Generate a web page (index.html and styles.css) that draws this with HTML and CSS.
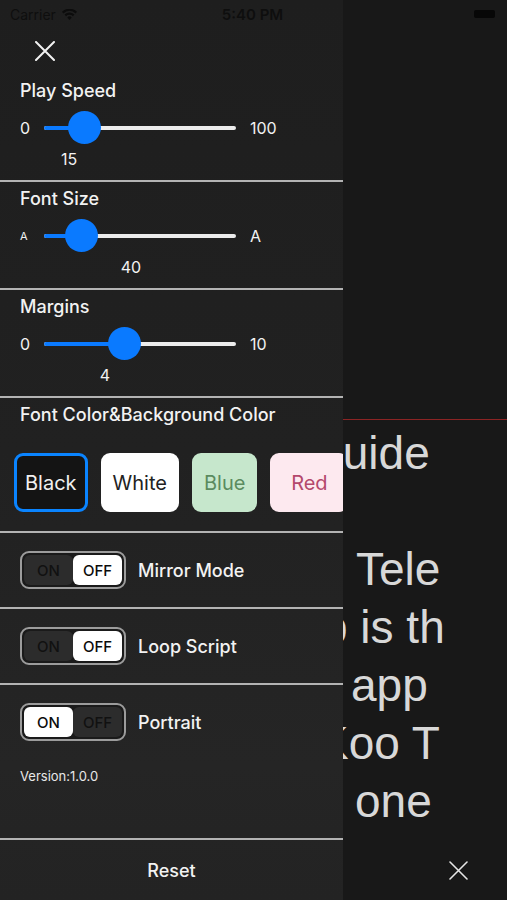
FILE: index.html
```html
<!DOCTYPE html>
<html lang="en">

<head>
    <meta charset="UTF-8">
    <meta name="viewport" content="width=device-width, initial-scale=1.0">
    <title>Settings</title>
    <link rel="stylesheet" href="styles.css">
</head>

<body>
    <div class="statusbar">
        <span class="carrier">Carrier
            <svg class="wifi" width="15" height="11" viewBox="0 0 15 11">
                <path d="M7.5 11 L5.3 8.4 A3.2 3.2 0 0 1 9.7 8.4 Z" fill="#0c0c0c"/>
                <path d="M2.6 5.6 A7 7 0 0 1 12.4 5.6 L11 7.2 A4.9 4.9 0 0 0 4 7.2 Z" fill="#0c0c0c"/>
                <path d="M0 2.8 A10.6 10.6 0 0 1 15 2.8 L13.6 4.4 A8.5 8.5 0 0 0 1.4 4.4 Z" fill="#0c0c0c"/>
            </svg>
        </span>
        <span class="clock">5:40 PM</span>
        <span class="battery"></span>
    </div>

    <div class="app">
        <div class="panel">
            <div class="close-row">
                <svg width="20" height="20" viewBox="0 0 20 20">
                    <path d="M1 1 L19 19 M19 1 L1 19" stroke="#f2f2f2" stroke-width="2" stroke-linecap="round"/>
                </svg>
            </div>

            <div class="section">
                <div class="title">Play Speed</div>
                <div class="slider-row">
                    <span class="min">0</span>
                    <div class="track" style="--p: 0.15">
                        <span class="fill"></span>
                        <span class="thumb"></span>
                    </div>
                    <span class="max">100</span>
                </div>
                <div class="value"><span style="--x: 25px">15</span></div>
            </div>

            <div class="section">
                <div class="title">Font Size</div>
                <div class="slider-row">
                    <span class="min small-a">A</span>
                    <div class="track" style="--p: 0.135">
                        <span class="fill"></span>
                        <span class="thumb"></span>
                    </div>
                    <span class="max">A</span>
                </div>
                <div class="value"><span style="--x: 87px">40</span></div>
            </div>

            <div class="section">
                <div class="title">Margins</div>
                <div class="slider-row">
                    <span class="min">0</span>
                    <div class="track" style="--p: 0.4">
                        <span class="fill"></span>
                        <span class="thumb"></span>
                    </div>
                    <span class="max">10</span>
                </div>
                <div class="value"><span style="--x: 61px">4</span></div>
            </div>

            <div class="section colors">
                <div class="title">Font Color&amp;Background Color</div>
                <div class="swatches">
                    <button class="swatch black selected">Black</button>
                    <button class="swatch white">White</button>
                    <button class="swatch blue">Blue</button>
                    <button class="swatch red">Red</button>
                </div>
            </div>

            <div class="toggle-row">
                <div class="seg">
                    <span class="seg-opt">ON</span>
                    <span class="seg-opt active">OFF</span>
                </div>
                <span class="toggle-label">Mirror Mode</span>
            </div>

            <div class="toggle-row">
                <div class="seg">
                    <span class="seg-opt">ON</span>
                    <span class="seg-opt active">OFF</span>
                </div>
                <span class="toggle-label">Loop Script</span>
            </div>

            <div class="toggle-row last">
                <div class="seg">
                    <span class="seg-opt active">ON</span>
                    <span class="seg-opt">OFF</span>
                </div>
                <span class="toggle-label">Portrait</span>
                <div class="version">Version:1.0.0</div>
            </div>

            <div class="reset">Reset</div>
        </div>

        <div class="stage">
            <div class="marker"></div>
            <div class="script">
                <p class="ln ln-1">Guide</p>
                <p class="ln">&nbsp;</p>
                <p class="ln ln-3">Tele</p>
                <p class="ln ln-4">p is th</p>
                <p class="ln ln-5">app</p>
                <p class="ln ln-6">Koo T</p>
                <p class="ln ln-7">one</p>
            </div>
            <div class="stage-bottom">
                <svg width="19" height="19" viewBox="0 0 19 19">
                    <path d="M1 1 L18 18 M18 1 L1 18" stroke="#e6e6e6" stroke-width="1.6" stroke-linecap="round"/>
                </svg>
            </div>
        </div>
    </div>
</body>

</html>
```

FILE: styles.css
```css
body {
    margin: 0;
    width: 507px;
    height: 900px;
    overflow: hidden;
    background-color: #181818;
    font-family: 'Inter', 'Liberation Sans', sans-serif;
    color: #f2f2f2;
    position: relative;
}

.statusbar {
    position: absolute;
    top: 0;
    left: 0;
    right: 0;
    height: 28px;
    display: flex;
    align-items: center;
    justify-content: space-between;
    padding: 0 12px 0 10px;
    color: #0e0e0e;
    z-index: 2;
}

.carrier {
    display: flex;
    align-items: center;
    gap: 6px;
    font-size: 14px;
    width: 110px;
}

.clock {
    font-size: 15px;
    font-weight: 600;
}

.battery {
    width: 110px;
    display: flex;
    justify-content: flex-end;
}

.battery::after {
    content: "";
    width: 21px;
    height: 8px;
    border-radius: 2px;
    background-color: #070707;
}

.app {
    display: grid;
    grid-template-columns: 343px 1fr;
    height: 900px;
}

.panel {
    display: flex;
    flex-direction: column;
    padding-top: 28px;
    background: linear-gradient(180deg, #1e1e1e 0%, #212121 50%, #252525 85%, #232323 100%);
}

.close-row {
    height: 46px;
    display: flex;
    align-items: center;
    padding-left: 35px;
}

.section {
    padding: 6px 20px 12px;
    border-bottom: 2px solid #b3b3b3;
}

.title {
    font-size: 18px;
    line-height: 22px;
    font-weight: 500;
}

.slider-row {
    display: flex;
    align-items: center;
    height: 34px;
    margin-top: 9px;
    font-size: 16px;
}

.min {
    width: 24px;
}

.small-a {
    font-size: 11px;
}

.max {
    margin-left: 14px;
}

.track {
    position: relative;
    width: 192px;
    height: 4px;
    border-radius: 2px;
    background-color: #ececec;
}

.fill {
    position: absolute;
    left: 0;
    top: 0;
    bottom: 0;
    width: calc(var(--p) * (100% - 33px) + 16px);
    border-radius: 2px;
    background-color: #0a7aff;
}

.thumb {
    position: absolute;
    top: -15px;
    left: calc(var(--p) * (100% - 33px));
    width: 33px;
    height: 33px;
    border-radius: 50%;
    background-color: #0a7aff;
}

.value {
    height: 18px;
    margin-top: 5px;
    padding-left: 24px;
    font-size: 16px;
    line-height: 18px;
}

.value span {
    display: inline-block;
    transform: translateX(calc(var(--x) - 50%));
}

.colors {
    padding: 6px 0 19px;
}

.colors .title {
    padding-left: 20px;
}

.swatches {
    display: flex;
    gap: 13px;
    margin-top: 27px;
    padding-left: 14px;
    overflow: hidden;
}

.swatch {
    flex-shrink: 0;
    height: 59px;
    padding: 0 12px;
    border: none;
    border-radius: 9px;
    font-family: inherit;
    font-size: 20px;
}

.black {
    background-color: #141414;
    color: #f0f0f0;
}

.selected {
    border: 3px solid #0a84ff;
    padding: 0 8px;
}

.white {
    background-color: #ffffff;
    color: #222;
}

.blue {
    background-color: #c6e7cc;
    color: #5b8b5f;
}

.red {
    min-width: 78px;
    background-color: #fde9ef;
    color: #b4486c;
}

.toggle-row {
    display: flex;
    flex-wrap: wrap;
    align-items: center;
    gap: 12px;
    padding: 18px 20px;
    border-bottom: 2px solid #b3b3b3;
}

.toggle-row.last {
    flex: 1;
    align-content: flex-start;
    border-bottom: 2px solid #b3b3b3;
}

.seg {
    display: flex;
    box-sizing: border-box;
    width: 106px;
    height: 38px;
    padding: 2px;
    border: 2px solid #9c9c9c;
    border-radius: 9px;
    background-color: #1a1a1a;
}

.seg-opt {
    flex: 1;
    display: flex;
    align-items: center;
    justify-content: center;
    border-radius: 6px;
    background-color: #2c2c2c;
    color: #111;
    font-size: 15px;
    font-weight: 500;
}

.seg-opt.active {
    background-color: #ffffff;
    color: #0b0b0b;
}

.toggle-label {
    font-size: 18px;
    font-weight: 500;
}

.version {
    width: 100%;
    margin-top: 15px;
    font-size: 13px;
    color: #e8e8e8;
}

.reset {
    height: 60px;
    display: flex;
    align-items: center;
    justify-content: center;
    font-size: 18px;
    font-weight: 500;
}

.stage {
    display: flex;
    flex-direction: column;
    overflow: hidden;
    background-color: #181818;
}

.marker {
    height: 1px;
    margin-top: 419px;
    background-color: #8c2424;
}

.script {
    padding-top: 4px;
    font-family: 'Liberation Sans', Arial, sans-serif;
    font-size: 46px;
    line-height: 58px;
    color: #d8d8d8;
    white-space: nowrap;
}

.ln {
    margin: 0;
}

.ln-1 { margin-left: -36px; }
.ln-3 { padding-left: 13px; }
.ln-4 { margin-left: -21px; }
.ln-5 { padding-left: 8px; }
.ln-6 { margin-left: -25px; }
.ln-7 { padding-left: 12px; }

.stage-bottom {
    margin-top: auto;
    height: 60px;
    display: flex;
    align-items: center;
    justify-content: flex-end;
    padding-right: 39px;
}
```
